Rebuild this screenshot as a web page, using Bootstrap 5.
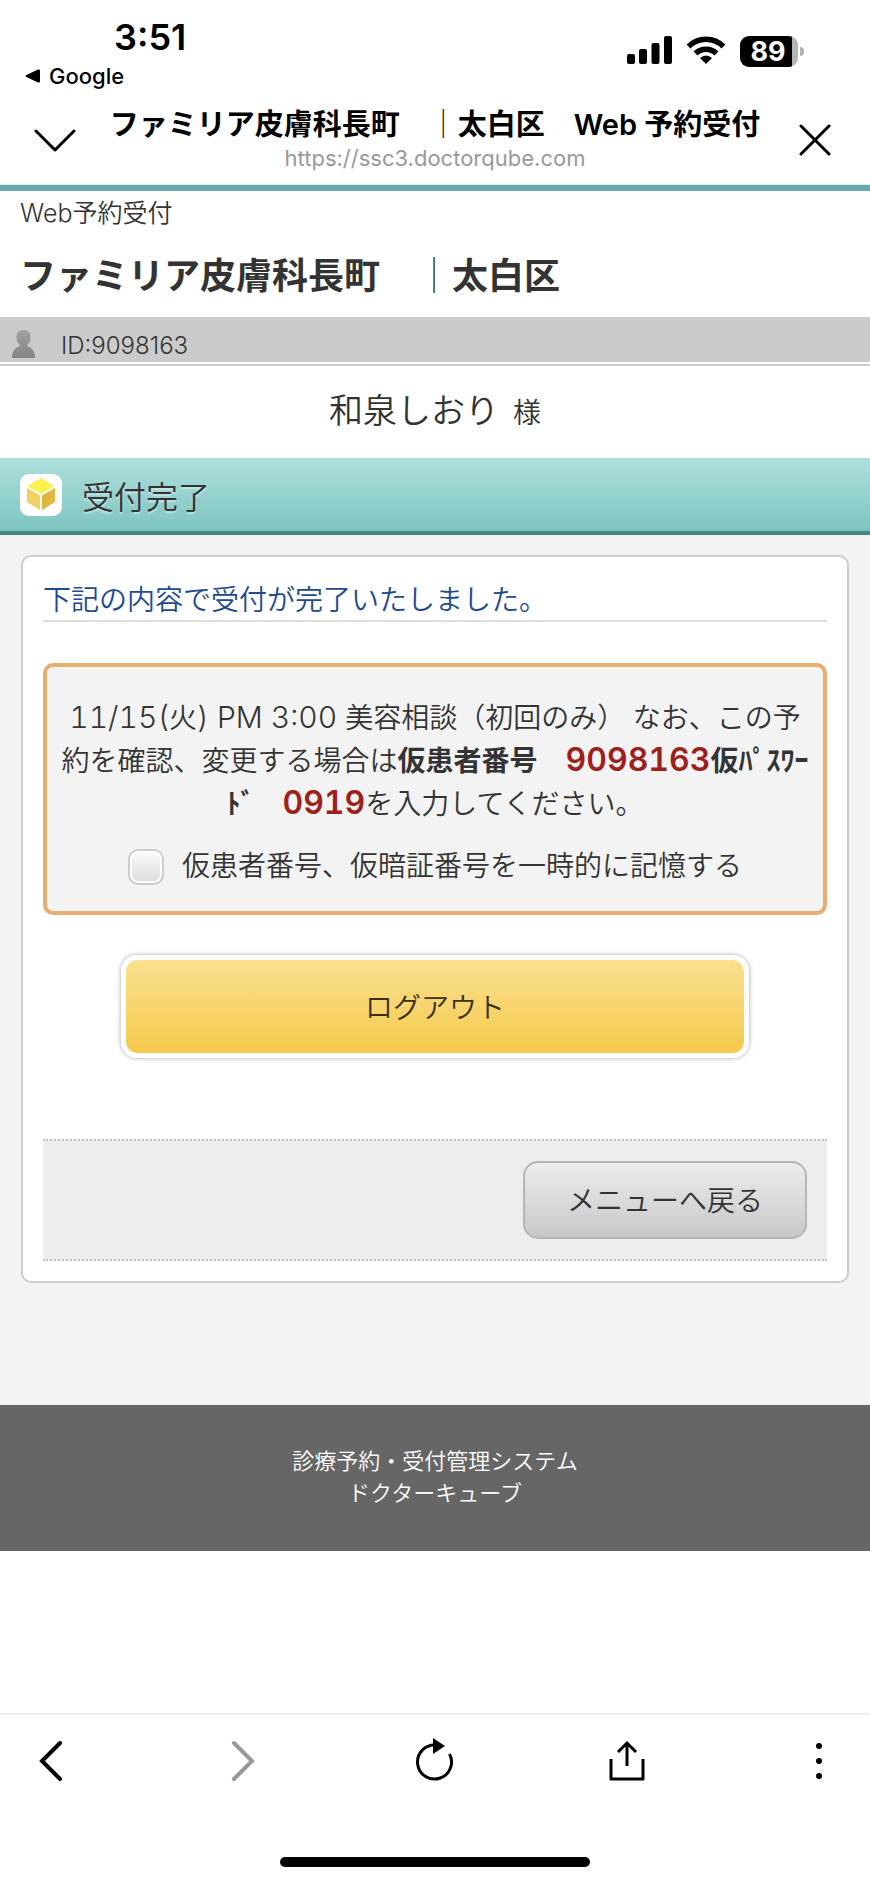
<!DOCTYPE html>
<html lang="ja">
<head>
<meta charset="utf-8">
<meta name="viewport" content="width=device-width, initial-scale=1">
<title>Web予約受付</title>
<link href="https://cdn.jsdelivr.net/npm/bootstrap@5.3.0/dist/css/bootstrap.min.css" rel="stylesheet">
<style>
  body { font-family: Inter, "Noto Sans CJK JP", sans-serif; font-weight: 350; font-size: 28px; line-height: 43px; color: #333; background: #fff; }
  button { font-family: inherit; }
  svg { display: block; flex: none; }
  .status-bar { height: 96px; color: #000; padding: 16px 66px 0 25px; }
  .clock { font-size: 36px; line-height: 42px; font-weight: 600; padding-left: 89px; }
  .back-app { font-size: 22px; line-height: 36px; font-weight: 500; color: #000; gap: 9px; }
  .status-icons { gap: 14px; padding-top: 20px; }
  .battery { width: 58px; height: 31px; border-radius: 9px; background: linear-gradient(to right, #000 52px, #b4b4b4 52px); color: #fff; font-size: 27px; line-height: 31px; font-weight: 700; padding-right: 2px; }
  .battery-tip { width: 4px; height: 9px; border-radius: 0 4px 4px 0; background: #b4b4b4; margin-left: 2px; }
  .browser-head { height: 89px; padding: 0 34px; color: #000; border-bottom: 1px solid #d6eeec; }
  .page-name { font-size: 29px; line-height: 34px; font-weight: 600; padding-top: 12px; }
  .page-url { font-size: 22px; line-height: 32px; font-weight: 400; color: #999; }
  .icon-btn { background: none; border: 0; padding: 0; }
  .site-head { border-top: 6px solid #65aaa9; height: 132px; padding: 0 20px; }
  .site-label { font-size: 25px; line-height: 44px; }
  .site-title { font-size: 36px; line-height: 44px; font-weight: 700; margin: 19px 0 0; }
  .id-bar { height: 45px; background: #cbcbcb; padding: 0 11px; gap: 25px; font-size: 24px; line-height: 33px; margin-bottom: 2px; }
  .patient { border-top: 2px solid #ccc; height: 94px; font-size: 34px; line-height: 90px; gap: 14px; }
  .honorific { font-size: 28px; }
  .section-title { height: 77px; margin: 0; padding: 0 20px; gap: 20px; border-bottom: 4px solid #478783; background: linear-gradient(#aedfdd, #7dc4c1); font-size: 32px; font-weight: 350; text-shadow: 0 2px 2px rgba(255,255,255,.5); }
  .section-title span { padding-top: 8px; }
  .content-area { background: #f3f3f3; padding: 20px 21px 122px; }
  .panel { background: #fff; border: 2px solid #ccc; border-radius: 10px; padding: 20px; }
  .lead-line { color: #224b8f; border-bottom: 2px solid #ddd; margin-bottom: 41px; height: 45px; line-height: 46px; }
  .notice { background: #f3f3f3; border: 4px solid #e8ae6f; border-radius: 10px; padding: 30px 10px 23px; font-variant-numeric: tabular-nums; }
  .notice strong { font-weight: 700; }
  .notice .date-part { font-size: 30px; line-height: 40px; }
  .notice .number { color: #9e1f1b; font-size: 32px; line-height: 40px; font-weight: 600; }
  .remember { margin-top: 19px; gap: 18px; }
  .remember input { appearance: none; width: 36px; height: 36px; margin: 0; border: 2px solid #ccc; border-radius: 10px; background: linear-gradient(#fbfbfb, #dcdcdc); box-shadow: inset 0 0 0 2px #fff; }
  .logout { display: block; width: 80%; height: 103px; margin: 40px auto 81px; padding-top: 4px; border: 5px solid #fff; border-radius: 16px; background: linear-gradient(#f9e090, #f5c94b) padding-box; box-shadow: 0 0 5px rgba(0,0,0,.35); color: #3a3115; font-size: 28px; font-weight: 350; }
  .menu-row { background: #ededed; border-top: 2px dotted #c4c4c4; border-bottom: 2px dotted #c4c4c4; padding: 20px; }
  .menu-btn { height: 78px; padding: 3px 42px 0; border: 2px solid #b5b5b5; border-radius: 15px; background: linear-gradient(#ececec, #c8c8c8); color: #333; font-size: 28px; font-weight: 350; }
  .site-foot { background: #666; color: #fff; font-size: 22px; line-height: 32px; padding: 40px 20px 42px; }
  .toolbar { border-top: 2px solid #eee; padding: 23px 19px 0; height: 144px; }
  .toolbar .icon-btn { width: 64px; }
  .toolbar svg { margin: auto; }
  .home-mark { width: 310px; height: 10px; border-radius: 5px; background: #000; }
</style>
</head>
<body class="d-flex flex-column min-vh-100">
  <div class="status-bar d-flex justify-content-between">
    <div>
      <div class="clock">3:51</div>
      <a href="#" class="back-app d-flex align-items-center text-decoration-none">
        <svg width="15" height="14" viewBox="0 0 15 14"><path d="M1.500 6 13 .6q2-.6 2 1v10.800q0 1.600-2 1L1.500 8q-2-1 0-2z"/></svg>Google
      </a>
    </div>
    <div class="status-icons d-flex align-items-start">
      <svg width="45" height="28" viewBox="0 0 45 28"><rect y="18" width="8" height="10" rx="2"/><rect x="12" y="13" width="8" height="15" rx="2"/><rect x="24.500" y="7" width="8" height="21" rx="2"/><rect x="37" width="8" height="28" rx="2"/></svg>
      <svg width="40" height="28" viewBox="0 0 40 28"><path d="M2.500 10.500a24.500 24.500 0 0 1 35 0" fill="none" stroke="#000" stroke-width="5.500"/><path d="M9.500 17.500a15 15 0 0 1 21 0" fill="none" stroke="#000" stroke-width="5.500"/><path d="M20 28l-6-6q6-5 12 0z"/></svg>
      <div class="d-flex align-items-center">
        <div class="battery text-center">89</div><div class="battery-tip"></div>
      </div>
    </div>
  </div>

  <header class="browser-head d-flex justify-content-between">
    <button type="button" class="icon-btn" aria-label="閉じる"><svg width="42" height="24" viewBox="0 0 42 24" fill="none" stroke="#000" stroke-width="3" stroke-linecap="round" stroke-linejoin="round"><path d="M2 3l19 19L40 3"/></svg></button>
    <div class="text-center text-nowrap">
      <div class="page-name">ファミリア皮膚科長町　<span class="fw-light">｜</span>太白区　Web 予約受付</div>
      <div class="page-url">https://ssc3.doctorqube.com</div>
    </div>
    <button type="button" class="icon-btn" aria-label="終了"><svg width="42" height="32" viewBox="0 0 42 32" fill="none" stroke="#000" stroke-width="3" stroke-linecap="round"><path d="M7 2l28 28M35 2L7 30"/></svg></button>
  </header>

  <div class="site-head">
    <div class="site-label">Web予約受付</div>
    <h1 class="site-title">ファミリア皮膚科長町　<span class="fw-light">｜</span>太白区</h1>
  </div>
  <div class="id-bar d-flex align-items-end">
    <svg class="mb-1" width="25" height="28" viewBox="0 0 25 28"><defs><linearGradient id="person" x2="0" y2="1"><stop stop-color="#a2a2a2"/><stop offset="1" stop-color="#838383"/></linearGradient></defs><path fill="url(#person)" d="M12.500 0c4.500 0 7 2 7 7.500 0 3.500-1.500 6-3 7v2c4 .6 7.500 4 7.500 11.500H1C1 20.500 4.500 17 8.500 16.500v-2c-1.500-1-3-3.500-3-7 0-5.500 2.500-7.500 7-7.500z"/></svg>
    <span>ID:9098163</span>
  </div>
  <div class="patient d-flex justify-content-center align-items-baseline">
    <span>和泉しおり</span><span class="honorific">様</span>
  </div>

  <h2 class="section-title d-flex align-items-center">
    <svg width="42" height="42" viewBox="0 0 42 42"><rect width="42" height="42" rx="9" fill="#fff"/><path fill="#faf04e" d="M21 4l13.500 8L21 20 7.500 12z"/><path fill="#f2d05f" d="M7 14l13 7.500V36L7 28z"/><path fill="#e3b63f" d="M35 14l-13 7.500V36l13-8z"/></svg>
    <span>受付完了</span>
  </h2>

  <main class="content-area">
    <section class="panel">
      <div class="lead-line">下記の内容で受付が完了いたしました。</div>
      <div class="notice text-center">
        <div><span class="date-part">11/15(</span>火<span class="date-part">) PM 3:00 </span>美容相談（初回のみ） なお、この予<br>約を確認、変更する場合は<strong>仮患者番号　<span class="number">9098163</span>仮ﾊﾟｽﾜｰ<br>ﾄﾞ　<span class="number">0919</span></strong>を入力してください。</div>
        <div class="remember d-flex justify-content-center align-items-center">
          <input type="checkbox" id="remember"><label for="remember">仮患者番号、仮暗証番号を一時的に記憶する</label>
        </div>
      </div>
      <button type="button" class="logout">ログアウト</button>
      <div class="menu-row d-flex justify-content-end">
        <button type="button" class="menu-btn">メニューへ戻る</button>
      </div>
    </section>
  </main>
  <footer class="site-foot text-center">診療予約・受付管理システム<br>ドクターキューブ</footer>

  <nav class="mt-auto">
    <div class="toolbar d-flex justify-content-between align-items-start">
      <button type="button" class="icon-btn" aria-label="戻る"><svg width="40" height="48" viewBox="0 0 40 48" fill="none" stroke="#000" stroke-width="4" stroke-linecap="round"><path d="M29 5L11 23l18 18"/></svg></button>
      <button type="button" class="icon-btn" aria-label="進む" disabled><svg width="40" height="48" viewBox="0 0 40 48" fill="none" stroke="#999" stroke-width="4" stroke-linecap="round"><path d="M11 5l18 18-18 18"/></svg></button>
      <button type="button" class="icon-btn" aria-label="再読み込み"><svg width="40" height="48" viewBox="0 0 40 48"><path d="M21 7.100A17 17 0 1 0 34.500 16" fill="none" stroke="#000" stroke-width="3"/><path d="M18 0l12 8-12 8z"/></svg></button>
      <button type="button" class="icon-btn" aria-label="共有"><svg width="40" height="48" viewBox="0 0 40 48" fill="none" stroke="#000" stroke-width="3"><path d="M4 21v20h32V21" stroke-linejoin="round"/><path d="M20 28V5M11 14l9-9 9 9"/></svg></button>
      <button type="button" class="icon-btn" aria-label="その他"><svg width="40" height="48" viewBox="0 0 40 48"><circle cx="20" cy="8" r="3"/><circle cx="20" cy="23" r="3"/><circle cx="20" cy="38" r="3"/></svg></button>
    </div>
    <div class="home-mark mx-auto mb-3"></div>
  </nav>
<script src="https://cdn.jsdelivr.net/npm/bootstrap@5.3.0/dist/js/bootstrap.bundle.min.js"></script>
</body>
</html>
